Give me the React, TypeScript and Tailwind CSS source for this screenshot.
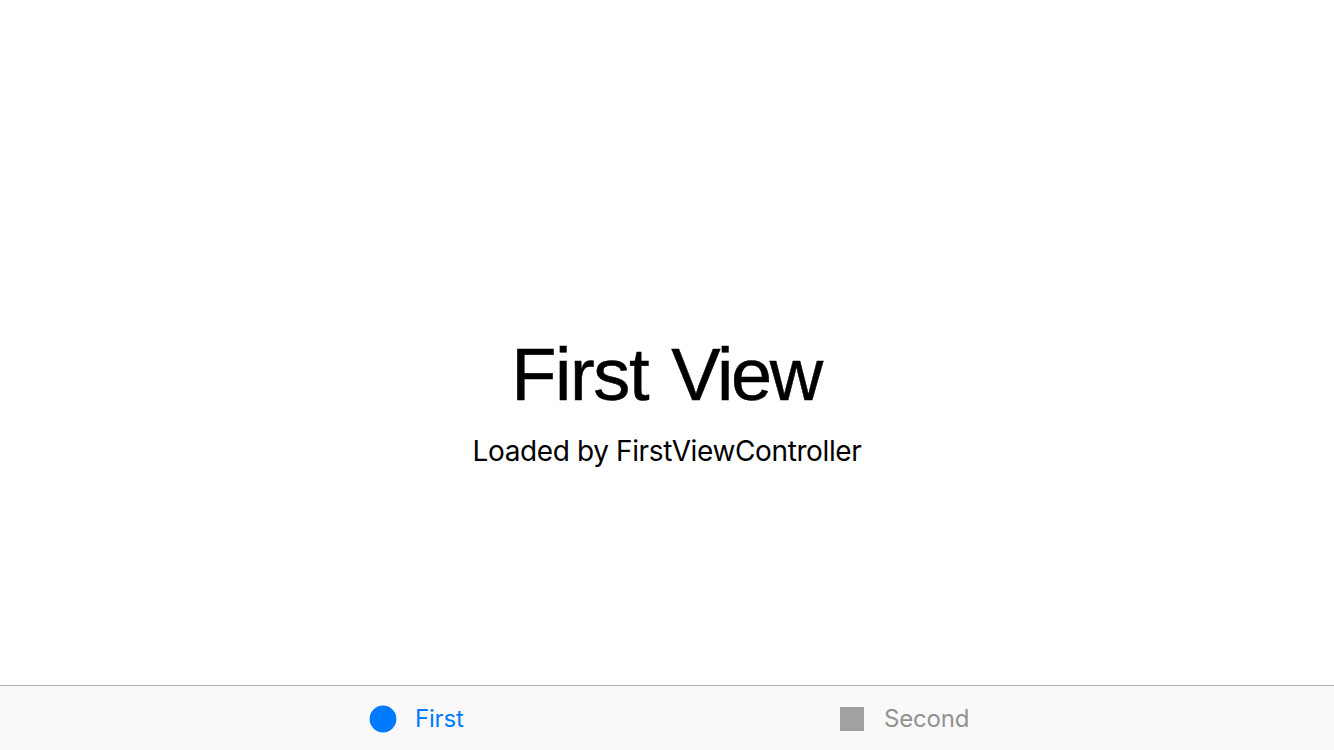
export default function App() {
  return (
    <div className="flex h-[750px] w-full flex-col bg-white text-black">
      <main className="flex flex-1 flex-col items-center pt-[335px]">
        <h1 className="pr-[2px] font-['Liberation_Sans',sans-serif] text-[74px] leading-[80px] tracking-[-1.4px] whitespace-nowrap [word-spacing:4px] [-webkit-text-stroke:0.5px_black]">
          First <span className="tracking-[-2.4px]">View</span>
        </h1>
        <p className="mt-[20px] font-['Inter',sans-serif] text-[28px] leading-[32px] tracking-[-0.38px] whitespace-nowrap">Loaded by FirstViewController</p>
      </main>
      <nav className="flex h-[65px] border-t border-[#b2b2b2] bg-[#f9f9f9] font-['Inter',sans-serif] text-[24px]">
        <button className="ml-[369px] flex w-[471px] items-center text-[#007aff]">
          <svg className="mt-[2px] mr-[18px]" width="28" height="28" viewBox="0 0 28 28"><circle cx="14" cy="14" r="13.4" fill="currentColor" /></svg>
          <span className="mt-[2px] tracking-[-0.2px]">First</span>
        </button>
        <button className="flex items-center text-[#929292]">
          <svg className="mt-[2px] mr-[20px]" width="24" height="24" viewBox="0 0 24 24"><rect width="24" height="24" fill="#a1a1a1" /></svg>
          <span className="mt-[2px] tracking-[-0.2px]">Second</span>
        </button>
      </nav>
    </div>
  );
}
